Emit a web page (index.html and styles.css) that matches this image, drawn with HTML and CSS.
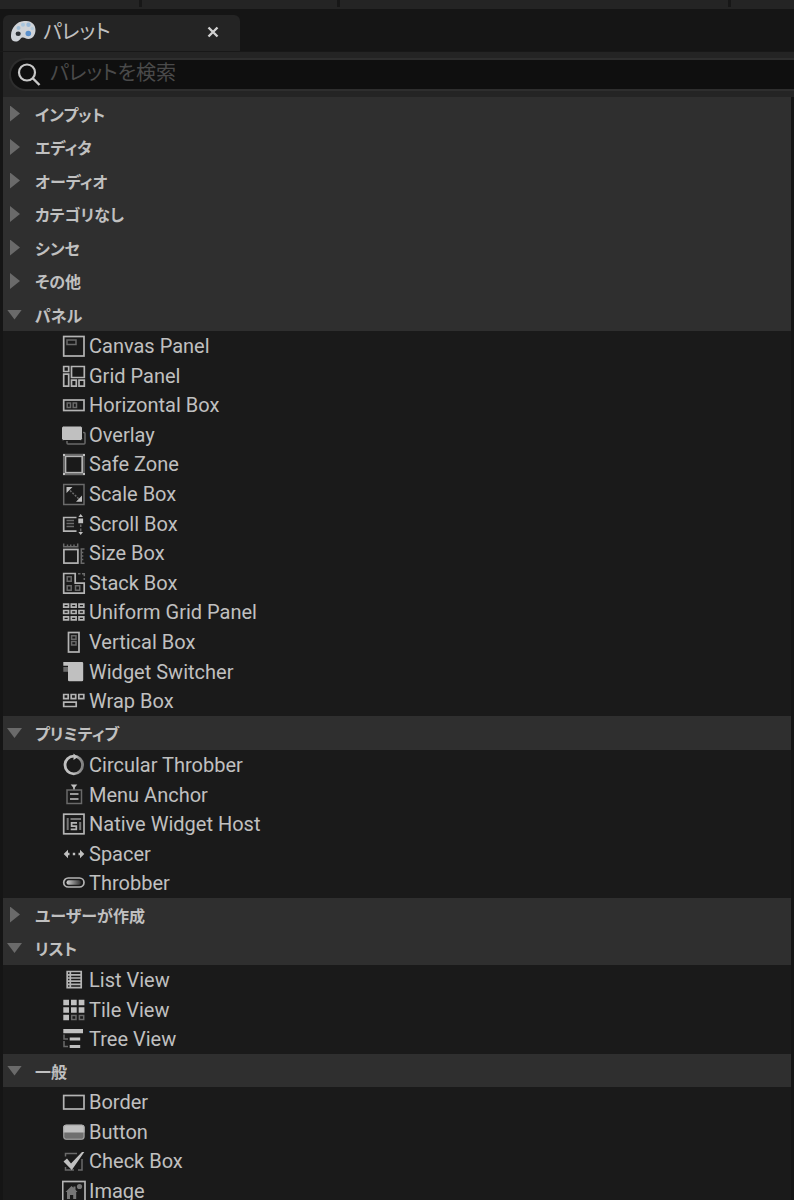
FILE: index.html
```html
<!DOCTYPE html>
<html lang="ja">
<head>
<meta charset="utf-8">
<title>パレット</title>
<link rel="stylesheet" href="styles.css">
</head>
<body>
<div class="app">
  <div class="toolbar"><span class="seg seg-a"></span><span class="seg seg-b"></span><span class="seg seg-c"></span><span class="seg seg-rest"></span></div>
  <div class="tabs">
    <div class="tab">
      <svg class="tab-icon" viewBox="0 0 26 22" aria-hidden="true">
        <path d="M0 16C-.500 8 5 .500 13 0C20 -.500 24.500 3 24.500 9C24.500 14 21.500 18 17.500 18C14.500 18 14 16.500 12 16.500C9.500 16.500 9.500 18.500 7.500 19.700C4.500 21.500 .300 20.500 0 16Z" fill="#cfd3d8"/>
        <ellipse cx="7.200" cy="12.800" rx="2.600" ry="2.200" fill="#2c3034"/>
        <circle cx="7.500" cy="7" r="2" fill="#9dbcd6"/><circle cx="12" cy="3.800" r="2" fill="#a9c6de"/>
        <circle cx="17.500" cy="3.700" r="2.200" fill="#98b9d8"/><circle cx="21.300" cy="7.500" r="1.700" fill="#b4cbdc"/>
        <circle cx="17.300" cy="12.500" r="2.800" fill="#5a90cc"/>
      </svg>
      <span class="tab-title">パレット</span>
      <button class="close" aria-label="閉じる"><svg viewBox="0 0 12 12"><path d="M1.500 1.500L10.500 10.500M10.500 1.500L1.500 10.500" stroke="#d0d0d0" stroke-width="2.400"/></svg></button>
    </div>
  </div>
  <div class="search-row">
    <label class="search">
      <svg class="search-icon" viewBox="0 0 24 24" aria-hidden="true"><circle cx="10" cy="9.500" r="8" fill="none" stroke="#c8c8c8" stroke-width="2.200"/><path d="M15.500 15L22.500 22" stroke="#c8c8c8" stroke-width="2.400"/></svg>
      <input type="text" placeholder="パレットを検索" aria-label="パレットを検索">
    </label>
  </div>
  <div class="tree">
    <section class="group"><button class="head" aria-expanded="false"><span class="arrow"></span>インプット</button></section>
    <section class="group"><button class="head" aria-expanded="false"><span class="arrow"></span>エディタ</button></section>
    <section class="group"><button class="head" aria-expanded="false"><span class="arrow"></span>オーディオ</button></section>
    <section class="group"><button class="head" aria-expanded="false"><span class="arrow"></span>カテゴリなし</button></section>
    <section class="group"><button class="head" aria-expanded="false"><span class="arrow"></span>シンセ</button></section>
    <section class="group"><button class="head" aria-expanded="false"><span class="arrow"></span>その他</button></section>
    <section class="group"><button class="head" aria-expanded="true"><span class="arrow"></span>パネル</button>
      <ul class="items">
        <li><svg class="icon" viewBox="0 0 24 24"><rect class="l" x="1.700" y="2.500" width="20.300" height="19.500"/><rect class="d" x="5" y="6" width="9" height="4.500"/></svg>Canvas Panel</li>
        <li><svg class="icon" viewBox="0 0 24 24"><path class="l" d="M1.700 2.500h5v5h-5zM1.700 10.200h5v12h-5zM9.500 2.500h12.800v11H9.500zM9.500 16.200h4.800v6H9.500zM17 16.200h5.300v6H17z"/></svg>Grid Panel</li>
        <li><svg class="icon" viewBox="0 0 24 24"><rect class="l" x="1.700" y="7" width="20.300" height="10.500"/><path class="d" d="M5.200 10h3.300v4.500H5.200zM11.200 10h3.300v4.500h-3.300z"/></svg>Horizontal Box</li>
        <li><svg class="icon" viewBox="0 0 24 24"><rect class="d" x="5" y="9.500" width="18" height="11.500" rx="1"/><rect class="f gap" x="-.500" y="3" width="21" height="14.500" rx="2"/></svg>Overlay</li>
        <li><svg class="icon" viewBox="0 0 24 24"><rect class="d" x="1.700" y="2.500" width="20.300" height="20"/><rect class="l" x="3.500" y="4.300" width="16.700" height="16.400"/><path class="f" d="M1 2h2v2H1zM21 2h2v2h-2zM1 21h2v2H1zM21 21h2v2h-2z"/></svg>Safe Zone</li>
        <li><svg class="icon" viewBox="0 0 24 24"><rect class="d" x="1.700" y="2.500" width="20.300" height="20"/><path class="f" d="M4.500 5h6l-6 6zM20 13.500v6.200h-6z"/><path class="d" d="M8 8.500L17 17" stroke-dasharray="2 1.300"/></svg>Scale Box</li>
        <li><svg class="icon" viewBox="0 0 24 24"><path class="l" d="M14.500 5.500H1.700v13.700h12.800"/><path class="d" d="M4.500 8.500H12M4.500 11.500H12M4.500 14.500H12"/><path class="f" d="M16.300 6.500h4.800v4.800h-4.800zM18.700 2l2.300 3h-4.600zM18.700 23l-2.300-3h4.600z"/><path class="d" d="M18.700 12.500v2.500M18.700 16.500v3"/></svg>Scroll Box</li>
        <li><svg class="icon" viewBox="0 0 24 24"><path class="d" d="M1.700 2.500v3.200h14V2.500M5.500 5.700V3.500M8.700 5.700V3.500M12 5.700V3.500M22.500 8h-3.200v14.200h3.200M19.300 11.500h2M19.300 15h2M19.300 18.500h2"/><rect class="l" x="1.900" y="8.500" width="14" height="13.600"/></svg>Size Box</li>
        <li><svg class="icon" viewBox="0 0 24 24"><path class="l" d="M1.700 2.500h11.500v9.700h9v10H1.700z"/><path class="d" d="M5.200 5.700h4v4.500h-4zM5.200 14.700h4v4.500h-4zM13.500 14.700h4.200v4.500h-4.200zM16 2.700h2.500M20 2.700h2.300v2.500M22.300 7v2"/></svg>Stack Box</li>
        <li><svg class="icon" viewBox="0 0 24 24"><path class="l" d="M1.700 4.200h4.800v3H1.700zM9.300 4.200h4.800v3H9.300zM17 4.200h4.800v3H17zM1.700 10.500h4.800v3H1.700zM9.300 10.500h4.800v3H9.300zM17 10.500h4.800v3H17zM1.700 16.800h4.800v3H1.700zM9.300 16.800h4.800v3H9.300zM17 16.800h4.800v3H17z"/></svg>Uniform Grid Panel</li>
        <li><svg class="icon" viewBox="0 0 24 24"><rect class="l" x="6.500" y="2.500" width="10.500" height="19.500"/><path class="d" d="M9.600 5.800H14v3.500H9.600zM9.600 11.500H14V15H9.600z"/></svg>Vertical Box</li>
        <li><svg class="icon" viewBox="0 0 24 24"><path class="f" d="M1.300 2H20q1.200 0 1.200 1.200V20q0 1.300-1.200 1.300H7.300Q6 21.300 6 20V5.700H1.300z"/><path fill="#6b6b6b" d="M1.300 7H6v4.800H1.300z"/></svg>Widget Switcher</li>
        <li><svg class="icon" viewBox="0 0 24 24"><path class="l" d="M1.700 5.500h4.500v4.200H1.700zM9.200 5.500h4.500v4.200H9.200zM16.800 5.500h5v4.200h-5zM1.700 13.200h12.500v4.300H1.700z"/></svg>Wrap Box</li>
      </ul>
    </section>
    <section class="group"><button class="head" aria-expanded="true"><span class="arrow"></span>プリミティブ</button>
      <ul class="items">
        <li><svg class="icon" viewBox="0 0 24 24"><defs><linearGradient id="ring" x1="0" x2="1"><stop offset=".45" stop-color="#c0c0c0"/><stop offset="1" stop-color="#808080"/></linearGradient></defs><circle cx="11.800" cy="12" r="8.800" fill="none" stroke="url(#ring)" stroke-width="2.800"/><path class="f" d="M11.500 .500L16 4l-4.500 3z"/></svg>Circular Throbber</li>
        <li><svg class="icon" viewBox="0 0 24 24"><path class="f" d="M8.700 1.500h6.600L12 5.500z"/><path class="l" d="M12 4v3"/><rect class="d" x="5" y="7" width="14.500" height="13.500"/><path stroke="#999" stroke-width="1.800" d="M8 11h8.500M8 16h8.500"/></svg>Menu Anchor</li>
        <li><svg class="icon" viewBox="0 0 24 24"><rect class="l" x="1.700" y="2.200" width="20.300" height="19.600"/><path stroke="#777" stroke-width="2" fill="none" d="M5.700 6v12M8.500 7H19M18.200 10v8"/><path class="l" d="M15 10.800H9.600v3.300h4.700v3.200H8.700"/></svg>Native Widget Host</li>
        <li><svg class="icon" viewBox="0 0 24 24"><path class="f" d="M1.700 12L6 7.700v3.100h1.500v2.400H6v3.100zM22.300 12L18 7.700v3.100h-1.500v2.400H18v3.100zM10.800 10.800h2.400v2.400h-2.400z"/></svg>Spacer</li>
        <li><svg class="icon" viewBox="0 0 24 24"><defs><linearGradient id="bar"><stop offset="0" stop-color="#d0d0d0"/><stop offset="1" stop-color="#303030"/></linearGradient></defs><rect class="l" x="1.700" y="7" width="20.300" height="9" rx="4.500"/><rect x="4.500" y="9.300" width="14.500" height="4.400" rx="2.200" fill="url(#bar)"/></svg>Throbber</li>
      </ul>
    </section>
    <section class="group"><button class="head" aria-expanded="false"><span class="arrow"></span>ユーザーが作成</button></section>
    <section class="group"><button class="head" aria-expanded="true"><span class="arrow"></span>リスト</button>
      <ul class="items">
        <li><svg class="icon" viewBox="0 0 24 24"><path class="l" d="M5.200 3.500h14v16.200h-14zM8.300 3.500v16.200M5 6.800h14M5 10h14M5 13.200h14M5 16.400h14"/></svg>List View</li>
        <li><svg class="icon" viewBox="0 0 24 24"><path class="f" d="M1.300 1.700H7v5.600H1.300zM9 1.700h5.700v5.600H9zM16.700 1.700h5.700v5.600h-5.700zM1.300 9.200H7v5.600H1.300zM9 9.200h5.700v5.600H9zM16.700 9.200h5.700v5.600h-5.700zM1.300 16.700H7v5.600H1.300z"/><path class="d" d="M9.700 17.400H14v4.200H9.700zM17.400 17.400h4.300v4.200h-4.300z"/></svg>Tile View</li>
        <li><svg class="icon" viewBox="0 0 24 24"><path class="f" d="M1.300 2H21v4.200H1.300zM7.700 10.500h10.500v3H7.700zM7.700 18h10.500v3H7.700z"/><path class="d" d="M2 7.500V12h4M2 14v5.500h4"/></svg>Tree View</li>
      </ul>
    </section>
    <section class="group"><button class="head" aria-expanded="true"><span class="arrow"></span>一般</button>
      <ul class="items">
        <li><svg class="icon" viewBox="0 0 24 24"><rect class="l" x="1.700" y="5.500" width="20.300" height="13.500"/></svg>Border</li>
        <li><svg class="icon" viewBox="0 0 24 24"><rect x="1.300" y="4.700" width="21.200" height="15" rx="2.500" fill="#6f6f6f"/><path class="f" d="M1.300 12.500V7.200q0-2.500 2.500-2.500H20q2.500 0 2.500 2.500v5.300z"/><rect x="1.800" y="5.200" width="20.200" height="14" rx="2.300" fill="none" stroke="#aaa"/></svg>Button</li>
        <li><svg class="icon" viewBox="0 0 24 24"><path class="d" d="M3.500 7.500V4.500H15M20 10v11h-4M12 21H3.500v-3"/><path class="f" d="M1.500 12.500L5 9.500l4 5L20 3h2.300L9.800 21z"/></svg>Check Box</li>
        <li><svg class="icon" viewBox="0 0 24 24"><rect class="l" x=".700" y="2.500" width="22.300" height="20.500"/><path fill="#777" d="M3.500 13L9.500 7l2 1.800V7.500h2v3.200l2 2.300h-1.300v7h-3v-4H8v4H5v-7z"/><circle cx="17.500" cy="7.500" r="2.600" fill="#777"/></svg>Image</li>
      </ul>
    </section>
  </div>
</div>
</body>
</html>
```
FILE: styles.css
```css
* { box-sizing: border-box; }
body {
  margin: 0;
  background: #151515;
  color: #c0c0c0;
  font-family: Roboto, "Noto Sans CJK JP", sans-serif;
  font-feature-settings: "palt";
}
button, input { font: inherit; font-feature-settings: inherit; color: inherit; border: 0; padding: 0; margin: 0; background: none; }
.app { height: 100vh; overflow: hidden; display: flex; flex-direction: column; }

.toolbar { flex: none; display: flex; gap: 3px; height: 9px; background: #171717; border-bottom: 2px solid #242424; }
.seg { background: #242424; }
.seg-a { width: 139px; }
.seg-b { width: 195px; }
.seg-c { width: 388px; }
.seg-rest { flex: 1; }

.tabs { flex: none; padding: 6px 0 0 3px; border-bottom: 1px solid #181818; }
.tab { display: flex; align-items: center; width: 237px; height: 36px; padding: 0 21px 2px 8px; border-radius: 6px 6px 0 0; background: #242424; }
.tab-icon { width: 26px; height: 22px; }
.tab-title { flex: 1; margin-left: 6px; font-size: 20px; line-height: 32px; }
.close { width: 12px; height: 12px; }
.close svg { display: block; }

.search-row { flex: none; margin-left: 3px; padding: 6px 0 6px 6px; background: #242424; }
.search { display: flex; align-items: center; height: 33px; padding-left: 6px; border: 2px solid #2e2e2e; border-right: 0; border-radius: 17px 0 0 17px; background: #0f0f0f; }
.search-icon { width: 24px; height: 24px; flex: none; }
.search input { flex: 1; min-width: 0; height: 29px; padding-bottom: 4px; margin-left: 9px; font-size: 20px; outline: 0; }
.search input::placeholder { color: #4a4a4a; opacity: 1; }

.tree { flex: 1; min-height: 0; overflow: hidden; margin: 0 3px; background: #1a1a1a; }
.head { display: flex; align-items: center; width: 100%; height: 33px; background: #2f2f2f; font-size: 16px; font-weight: 700; text-align: left; }
.group:nth-child(even) .head { height: 34px; }
.arrow { flex: none; width: 10px; height: 16px; margin: 0 15px 0 7px; background: #6a6a6a; clip-path: polygon(0 0, 100% 50%, 0 100%); }
.head[aria-expanded="true"] .arrow { width: 15px; height: 10px; margin: 0 13px 0 4px; clip-path: polygon(0 0, 100% 0, 50% 100%); }

.items { list-style: none; margin: 0; padding: 0; }
.items li { display: flex; align-items: center; gap: 3px; height: 30px; padding-left: 59px; font-size: 20px; }
.items li:nth-child(5n + 2), .items li:nth-child(5n + 4) { height: 29px; }
.icon { flex: none; width: 24px; height: 24px; }
.l { fill: none; stroke: #b4b4b4; stroke-width: 1.7; }
.d { fill: none; stroke: #6a6a6a; stroke-width: 1.5; }
.f { fill: #c0c0c0; }
.gap { stroke: #1a1a1a; }
```
